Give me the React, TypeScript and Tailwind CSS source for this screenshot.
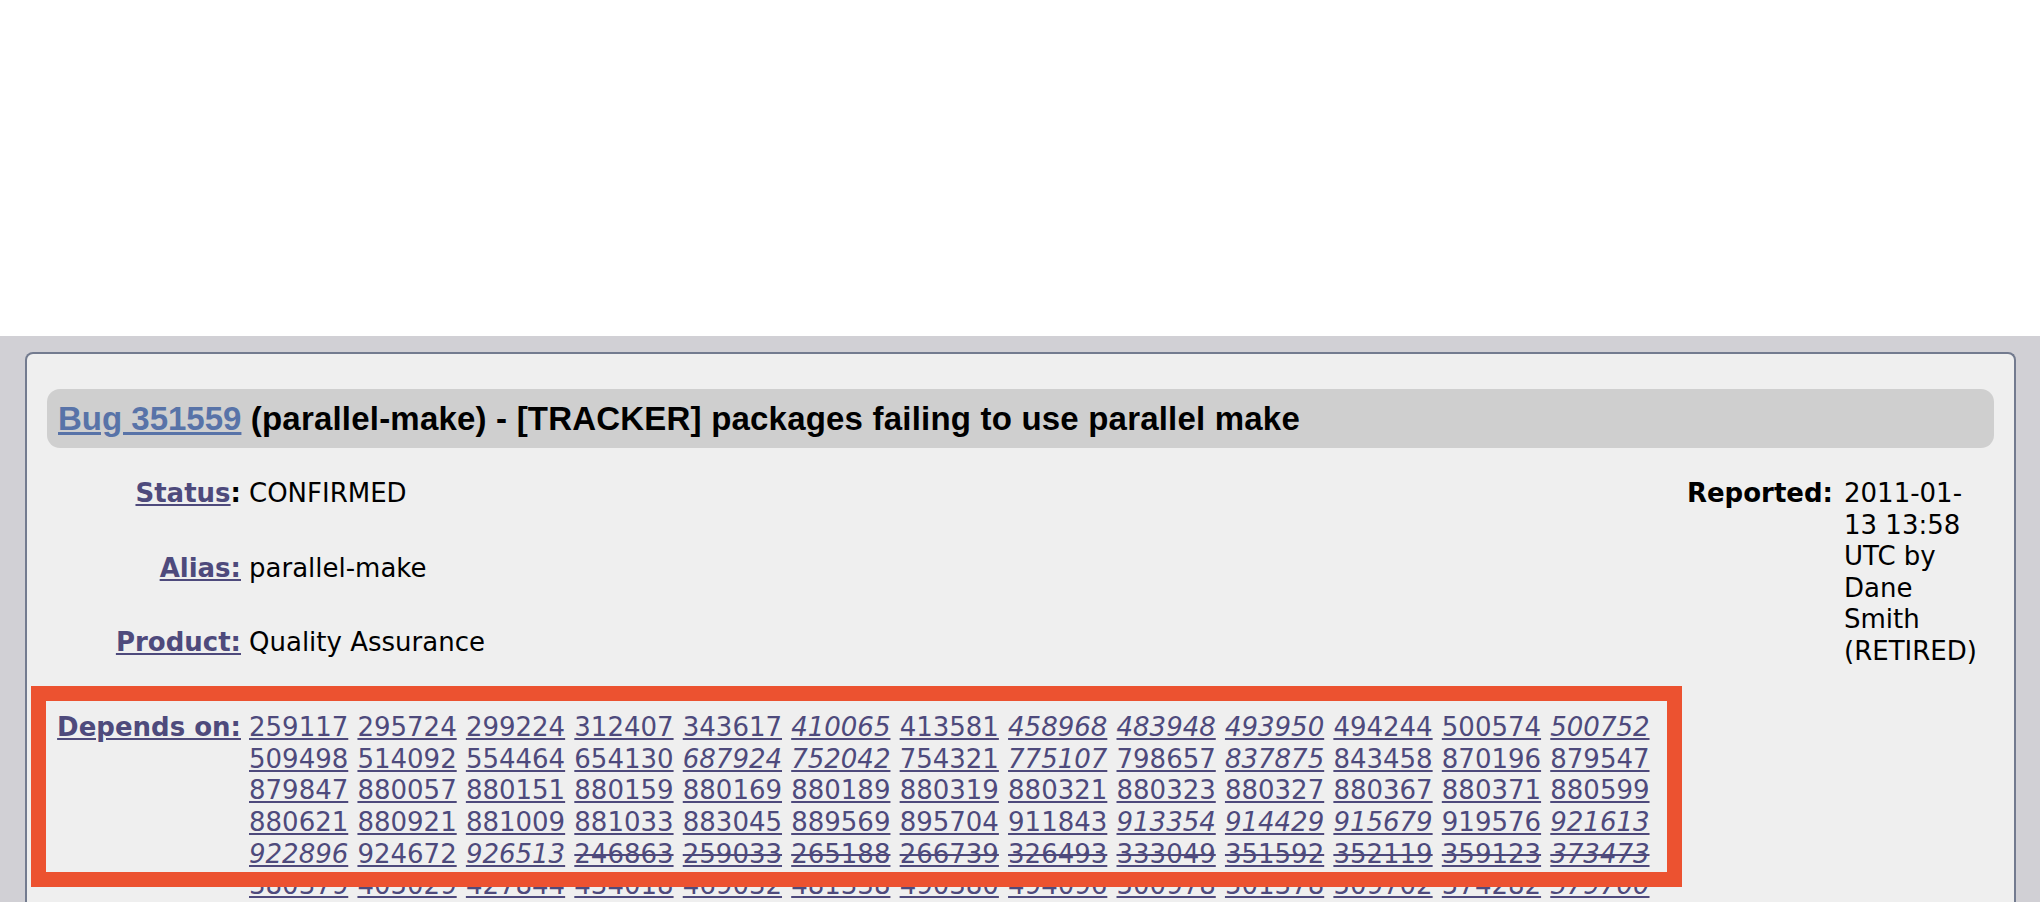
import React from "react";

type Dep = { n: string; i?: boolean; s?: boolean };

const parse = (list: string): Dep[] =>
  list
    .trim()
    .split(/\s+/)
    .map((t) => {
      let n = t;
      let i = false;
      let s = false;
      if (n.startsWith("~")) {
        s = true;
        n = n.slice(1);
      }
      if (n.startsWith("*")) {
        i = true;
        n = n.slice(1);
      }
      return { n, i, s };
    });

const deps = parse(`
259117 295724 299224 312407 343617 *410065 413581 *458968 *483948 *493950 494244 500574 *500752
509498 514092 554464 654130 *687924 *752042 754321 *775107 798657 *837875 843458 870196 879547
879847 880057 880151 880159 880169 880189 880319 880321 880323 880327 880367 880371 880599
880621 880921 881009 881033 883045 889569 895704 911843 *913354 *914429 *915679 919576 *921613
*922896 924672 *926513 ~246863 ~259033 ~265188 ~266739 ~326493 ~333049 ~351592 ~352119 ~359123 ~*373473
~380379 ~405029 ~427844 ~434018 ~469032 ~481338 ~490380 ~494096 ~500978 ~501378 ~509702 ~574282 ~*579700
~580411 ~582217 ~590143 ~601122 ~613870 ~625019 ~637450 ~641208 ~652773 ~660314 ~671902 ~688015 ~699431
`);

function DepLink({ d }: { d: Dep }) {
  const base = "text-[#4e4a7c]";
  if (d.s && d.i)
    return <a className={`${base} italic [text-decoration-line:underline_line-through]`}>{d.n}</a>;
  if (d.s) return <a className={`${base} [text-decoration-line:underline_line-through]`}>{d.n}</a>;
  if (d.i) return <a className={`${base} italic underline`}>{d.n}</a>;
  return <a className={`${base} underline`}>{d.n}</a>;
}

function Label({ children }: { children: React.ReactNode }) {
  return <div className="w-[194px] shrink-0 text-right font-bold">{children}</div>;
}

export default function App() {
  return (
    <div className="relative h-[902px] w-[2040px] overflow-hidden bg-white font-['DejaVu_Sans',Verdana,sans-serif] text-[26px] leading-[31.6px] text-black">
      <div className="h-[336px] bg-white" />
      <div className="h-[566px] bg-[#d1d0d5] pl-[25px] pr-[24px] pt-[16px]">
        <div className="h-[700px] rounded-t-[8px] border-2 border-b-0 border-[#737b8f] bg-[#efefef] px-[20px] pt-[35px]">
          <div className="flex h-[59px] items-center rounded-[13px] bg-[#cfcfcf] px-[11px] font-['Liberation_Sans',Arial,sans-serif] text-[33px] font-bold leading-none">
            <a className="text-[#5873a8] underline">Bug 351559</a>
            <span className="whitespace-pre tracking-[0.2px]"> (parallel-make) - [TRACKER] packages failing to use parallel make</span>
          </div>

          <div className="mt-[30px] flex">
            <div className="min-w-0 flex-1">
              <div className="flex">
                <Label>
                  <a className="text-[#4e4a7c] underline">Status</a>:
                </Label>
                <div className="ml-[8px]">CONFIRMED</div>
              </div>
              <div className="mt-[43px] flex">
                <Label>
                  <a className="text-[#4e4a7c] underline">Alias:</a>
                </Label>
                <div className="ml-[8px]">parallel-make</div>
              </div>
              <div className="mt-[42.5px] flex">
                <Label>
                  <a className="text-[#4e4a7c] underline">Product:</a>
                </Label>
                <div className="ml-[8px]">Quality Assurance</div>
              </div>
              <div className="mt-[54px] flex">
                <Label>
                  <a className="text-[#4e4a7c] underline">Depends on:</a>
                </Label>
                <div className="ml-[8px] min-w-0 flex-1 [word-spacing:0.9px]">
                  {deps.map((d, k) => (
                    <React.Fragment key={k}>
                      <DepLink d={d} />{" "}
                    </React.Fragment>
                  ))}
                </div>
              </div>
            </div>

            <div className="mr-[10px] flex shrink-0 gap-[11px]">
              <div className="whitespace-nowrap text-right font-bold">Reported:</div>
              <div className="w-[140px]">2011-01-13 13:58 UTC by Dane Smith (RETIRED)</div>
            </div>
          </div>
        </div>
      </div>

      <div className="absolute left-[31px] top-[686px] h-[201px] w-[1651px] border-[15px] border-[#ec5230]" />
    </div>
  );
}
